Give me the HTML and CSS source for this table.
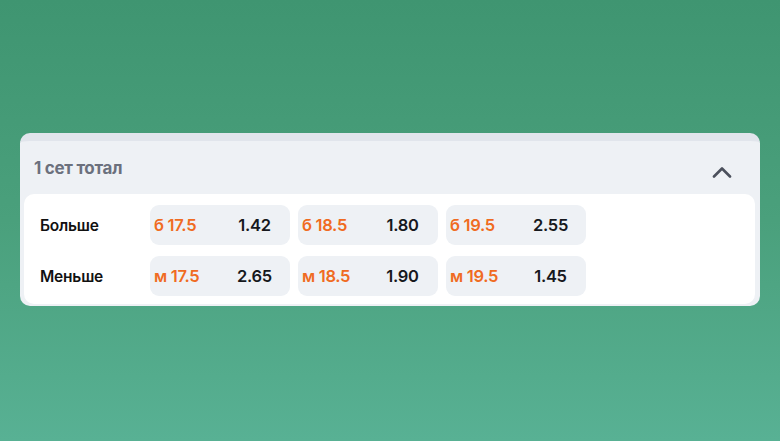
FILE: index.html
```html
<!DOCTYPE html>
<html lang="ru">
<head>
<meta charset="utf-8">
<link rel="stylesheet" href="styles.css">
</head>
<body>
<div class="card">
  <div class="header">
    <span class="title">1 сет тотал</span>
    <svg class="chev" width="20" height="12" viewBox="0 0 20 12"><path d="M2 10.5 L10 2.5 L18 10.5" fill="none" stroke="#4b505c" stroke-width="2.6" stroke-linecap="round" stroke-linejoin="round"/></svg>
  </div>
  <div class="panel">
    <div class="grid">
      <div class="label">Больше</div>
      <div class="cell"><span class="line">б 17.5</span><span class="odd">1.42</span></div>
      <div class="cell"><span class="line">б 18.5</span><span class="odd">1.80</span></div>
      <div class="cell"><span class="line">б 19.5</span><span class="odd">2.55</span></div>
      <div class="label">Меньше</div>
      <div class="cell"><span class="line">м 17.5</span><span class="odd">2.65</span></div>
      <div class="cell"><span class="line">м 18.5</span><span class="odd">1.90</span></div>
      <div class="cell"><span class="line">м 19.5</span><span class="odd">1.45</span></div>
    </div>
  </div>
</div>
</body>
</html>
```
FILE: styles.css
```css
html, body {
  margin: 0;
  height: 441px;
}
body {
  background: linear-gradient(180deg, #3f9571 0%, #4aa07c 50%, #58b194 100%);
  font-family: Inter, "Noto Sans", sans-serif;
  padding-top: 133px;
  box-sizing: border-box;
}
.card {
  margin-left: 20px;
  width: 740px;
  background: #eef1f5;
  border-top: 8px solid #e1e5ec;
  border-radius: 10px;
  padding-bottom: 2px;
  box-sizing: border-box;
}
.header {
  height: 53px;
  display: flex;
  align-items: center;
  justify-content: space-between;
  padding: 0 28px 0 14px;
}
.title {
  font-size: 17px;
  font-weight: 700;
  color: #6b707d;
  letter-spacing: -0.3px;
  margin-top: 1px;
}
.chev {
  margin-top: 8px;
}
.panel {
  margin: 0 5px 0 4px;
  background: #ffffff;
  border-radius: 10px;
  padding: 11px 16px 8px 16px;
}
.grid {
  display: grid;
  grid-template-columns: 102px repeat(3, 140px);
  column-gap: 8px;
  row-gap: 11px;
}
.label {
  display: flex;
  align-items: center;
  font-size: 15.5px;
  font-weight: 600;
  color: #111;
  letter-spacing: -0.2px;
}
.cell {
  height: 40px;
  background: #eef1f5;
  border-radius: 9px;
  display: grid;
  grid-template-columns: 1fr 1fr;
  align-items: center;
  font-size: 16.5px;
  font-weight: 600;
  letter-spacing: -0.3px;
}
.line {
  color: #f06b22;
  padding-left: 4px;
}
.odd {
  color: #16181d;
  text-align: center;
  padding-right: 1px;
}
```
